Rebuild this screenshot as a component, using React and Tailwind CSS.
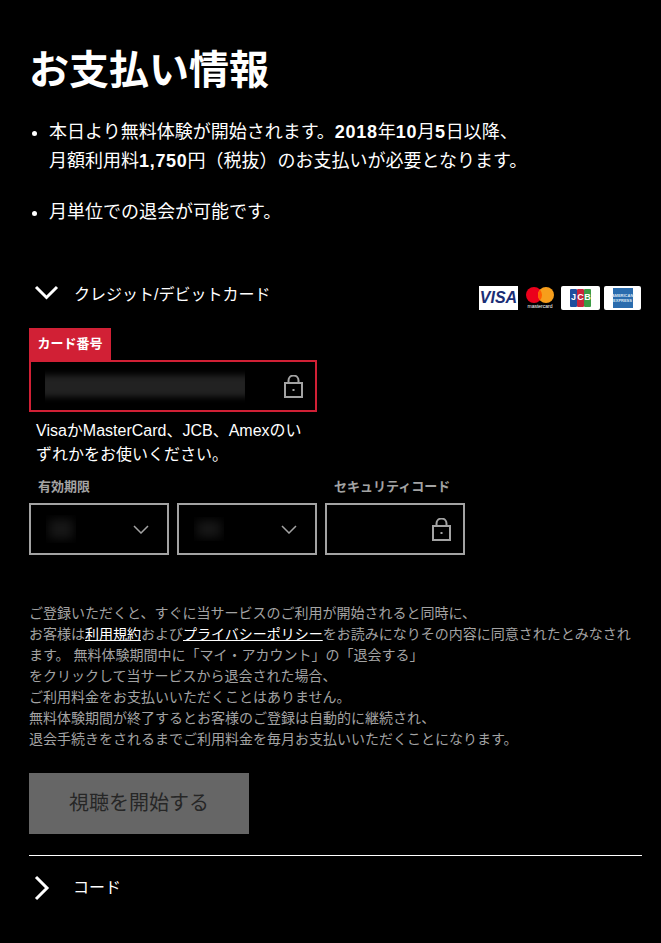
import React from 'react';

const font = { fontFamily: '"Liberation Sans", "Noto Sans CJK JP", sans-serif' };

const Lock = () => (
  <svg width="19" height="23" viewBox="0 0 19 23" fill="none" stroke="#a3a3a3" strokeWidth="2" className="shrink-0">
    <rect x="1" y="8" width="17" height="14" />
    <path d="M4.5 8V5.5a5 5 0 0 1 10 0V8" />
    <rect x="8.5" y="14" width="2" height="2" fill="#a3a3a3" stroke="none" />
  </svg>
);

const Caret = () => (
  <svg width="16" height="9" viewBox="0 0 16 9" fill="none" stroke="#a3a3a3" strokeWidth="1.5" className="shrink-0">
    <path d="M1 1l7 7 7-7" />
  </svg>
);

const Smudge = ({ box, glow }) => (
  <div className={`overflow-hidden ${box}`}>
    <div className={`h-full w-full ${glow}`}></div>
  </div>
);

const Select = ({ box }) => (
  <div className="w-[140px] h-[52px] border-2 border-[#a3a3a3] flex items-center justify-between pl-[15px] pr-[18px]">
    <Smudge box={box} glow="bg-[#161616] blur-[6px] scale-x-[0.8] scale-y-[0.7]" />
    <Caret />
  </div>
);

const Visa = () => (
  <div className="w-[39px] h-[24px] bg-white flex items-center justify-center">
    <span className="text-[#1a2d75] text-[16px] font-bold italic leading-none">VISA</span>
  </div>
);

const Master = () => (
  <div className="w-[28px] h-[22px] flex flex-col items-center">
    <svg width="28" height="16" viewBox="0 0 28 16">
      <circle cx="8" cy="8" r="8" fill="#eb001b" />
      <circle cx="20" cy="8" r="8" fill="#f79e1b" />
      <path d="M14 2.7a8 8 0 0 1 0 10.6a8 8 0 0 1 0-10.6z" fill="#ff5f00" />
    </svg>
    <span className="text-[5px] leading-[6px] text-white">mastercard</span>
  </div>
);

const JcbBar = ({ letter, color }) => (
  <div className={`w-[7px] rounded-[1px] flex items-center justify-center text-white text-[9px] leading-none font-bold ${color}`}>{letter}</div>
);

const Jcb = () => (
  <div className="w-[39px] h-[24px] bg-white rounded-[2px] flex items-center justify-center">
    <div className="flex h-[18px]">
      <JcbBar letter="J" color="bg-[#1f4e9e]" />
      <JcbBar letter="C" color="bg-[#c8243b]" />
      <JcbBar letter="B" color="bg-[#3b9b45]" />
    </div>
  </div>
);

const Amex = () => (
  <div className="w-[37px] h-[24px] bg-white rounded-[2px] flex items-center justify-center">
    <div className="w-[20px] h-[20px] bg-[#2a6cae] flex flex-col items-center justify-center text-[#dbe7f3] text-[4px] leading-[5px] font-bold">
      <span>AMERICAN</span>
      <span>EXPRESS</span>
    </div>
  </div>
);

const Bullet = () => (
  <span className="absolute left-[-17px] top-[13px] w-[5px] h-[5px] rounded-full bg-white"></span>
);

const Num = ({ children }) => <span className="font-bold tracking-[0.7px]">{children}</span>;

export default function App() {
  return (
    <div style={font} className="w-[661px] h-[943px] bg-black text-white overflow-hidden pl-[29px] pr-[19px]">
      <h1 className="pt-[42px] text-[40px] leading-[56px] font-bold">お支払い情報</h1>

      <ul className="mt-[20px] pl-[20px] text-[18px] leading-[29px]">
        <li className="relative">
          <Bullet />
          本日より無料体験が開始されます。<Num>2018</Num>年<Num>10</Num>月<Num>5</Num>日以降、<br />月額利用料<Num>1,750</Num>円（税抜）のお支払いが必要となります。
        </li>
        <li className="relative mt-[22px]">
          <Bullet />
          月単位での退会が可能です。
        </li>
      </ul>

      <div className="mt-[52px] flex items-center justify-between h-[32px]">
        <div className="flex items-center">
          <svg width="25" height="15" viewBox="0 0 25 15" fill="none" stroke="white" strokeWidth="3" className="ml-[5px] mb-[5px]">
            <path d="M2 2l10.5 10.5L23 2" />
          </svg>
          <span className="ml-[15px] text-[16px]">クレジット/デビットカード</span>
        </div>
        <div className="flex items-center pr-[1px] mt-[5px]">
          <Visa />
          <div className="ml-[8px]"><Master /></div>
          <div className="ml-[7px]"><Jcb /></div>
          <div className="ml-[4px]"><Amex /></div>
        </div>
      </div>

      <div className="mt-[17px] w-[82px] h-[32px] bg-[#d12035] flex items-center justify-center text-[13px] font-bold">カード番号</div>
      <div className="w-[288px] h-[52px] border-2 border-[#d12035] flex items-center justify-between pl-[14px] pr-[12px]">
        <Smudge box="w-[200px] h-[36px]" glow="bg-[#222222] blur-[5px] scale-x-[1.1] scale-y-[0.6]" />
        <Lock />
      </div>

      <p className="mt-[7px] pl-[7px] w-[288px] text-[16px] leading-[24px]">VisaかMasterCard、JCB、Amexのい<br />ずれかをお使いください。</p>

      <div className="mt-[10px] flex gap-[8px] text-[13px] font-bold text-[#a3a3a3] leading-[20px] h-[26px]">
        <span className="w-[140px] pl-[9px]">有効期限</span>
        <span className="w-[140px]"></span>
        <span className="w-[140px] pl-[9px] whitespace-nowrap">セキュリティコード</span>
      </div>
      <div className="flex gap-[8px]">
        <Select box="w-[30px] h-[28px]" />
        <Select box="w-[30px] h-[24px]" />
        <div className="w-[140px] h-[52px] border-2 border-[#a3a3a3] flex items-center justify-end pr-[12px]">
          <Lock />
        </div>
      </div>

      <p className="mt-[48px] text-[14px] leading-[21px] text-[#a3a3a3]">
        ご登録いただくと、すぐに当サービスのご利用が開始されると同時に、<br />
        お客様は<span className="text-white underline">利用規約</span>および<span className="text-white underline">プライバシーポリシー</span>をお読みになりその内容に同意されたとみなされ<br />
        ます。 無料体験期間中に「マイ・アカウント」の「退会する」<br />
        をクリックして当サービスから退会された場合、<br />
        ご利用料金をお支払いいただくことはありません。<br />
        無料体験期間が終了するとお客様のご登録は自動的に継続され、<br />
        退会手続きをされるまでご利用料金を毎月お支払いいただくことになります。
      </p>

      <button className="mt-[23px] pb-[2px] block w-[220px] h-[61px] bg-[#666666] text-[#262626] text-[20px]">視聴を開始する</button>

      <div className="mt-[21px] border-t border-white flex items-center h-[64px]">
        <svg width="16" height="26" viewBox="0 0 16 26" fill="none" stroke="white" strokeWidth="3" className="ml-[5px]">
          <path d="M2 2l11 11L2 24" />
        </svg>
        <span className="ml-[23px] text-[16px]">コード</span>
      </div>
    </div>
  );
}
